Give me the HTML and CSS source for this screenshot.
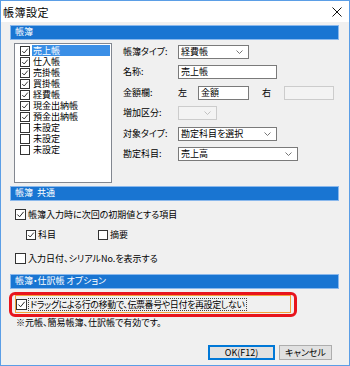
FILE: index.html
```html
<!DOCTYPE html>
<html lang="ja">
<head>
  <meta charset="UTF-8">
  <title>帳簿設定</title>
  <link rel="stylesheet" href="styles.css">
</head>
<body>

<div class="window">
  <div class="titlebar">
    <span class="title">帳簿設定</span>
    <svg class="close" width="10" height="10" viewBox="0 0 10 10">
      <path d="M0.5 0.5 L9.5 9.5 M9.5 0.5 L0.5 9.5" stroke="#111" stroke-width="1" fill="none"/>
    </svg>
  </div>

  <div class="body">
    <div class="bar">帳簿</div>
    <div class="ledger">
      <ul class="list">
        <li><span class="chk on"><svg viewBox="0 0 10 10"><path d="M1.5 5 L4 7.5 L8.5 2"/></svg></span><span class="item sel">売上帳</span></li>
        <li><span class="chk on"><svg viewBox="0 0 10 10"><path d="M1.5 5 L4 7.5 L8.5 2"/></svg></span><span class="item">仕入帳</span></li>
        <li><span class="chk on"><svg viewBox="0 0 10 10"><path d="M1.5 5 L4 7.5 L8.5 2"/></svg></span><span class="item">売掛帳</span></li>
        <li><span class="chk on"><svg viewBox="0 0 10 10"><path d="M1.5 5 L4 7.5 L8.5 2"/></svg></span><span class="item">買掛帳</span></li>
        <li><span class="chk on"><svg viewBox="0 0 10 10"><path d="M1.5 5 L4 7.5 L8.5 2"/></svg></span><span class="item">経費帳</span></li>
        <li><span class="chk on"><svg viewBox="0 0 10 10"><path d="M1.5 5 L4 7.5 L8.5 2"/></svg></span><span class="item">現金出納帳</span></li>
        <li><span class="chk on"><svg viewBox="0 0 10 10"><path d="M1.5 5 L4 7.5 L8.5 2"/></svg></span><span class="item">預金出納帳</span></li>
        <li><span class="chk"></span><span class="item">未設定</span></li>
        <li><span class="chk"></span><span class="item">未設定</span></li>
        <li><span class="chk"></span><span class="item">未設定</span></li>
      </ul>

      <div class="form">
        <span class="label">帳簿タイプ:</span>
        <div class="combo w71"><span>経費帳</span><svg class="arrow" width="7" height="4" viewBox="0 0 7 4"><path d="M0.5 0.5 L3.5 3.5 L6.5 0.5"/></svg></div>

        <span class="label">名称:</span>
        <div class="field w99">売上帳</div>

        <span class="label">金額欄:</span>
        <div class="amount">
          <span class="side">左</span>
          <div class="field w51">金額</div>
          <span class="side right">右</span>
          <div class="field w50 disabled"></div>
        </div>

        <span class="label">増加区分:</span>
        <div class="combo w39 disabled"><span></span><svg class="arrow" width="7" height="4" viewBox="0 0 7 4"><path d="M0.5 0.5 L3.5 3.5 L6.5 0.5"/></svg></div>

        <span class="label">対象タイプ:</span>
        <div class="combo w99"><span>勘定科目を選択</span><svg class="arrow" width="7" height="4" viewBox="0 0 7 4"><path d="M0.5 0.5 L3.5 3.5 L6.5 0.5"/></svg></div>

        <span class="label">勘定科目:</span>
        <div class="combo w120"><span>売上高</span><svg class="arrow" width="7" height="4" viewBox="0 0 7 4"><path d="M0.5 0.5 L3.5 3.5 L6.5 0.5"/></svg></div>
      </div>
    </div>

    <div class="bar">帳簿&nbsp;&nbsp;共通</div>
    <div class="opt first"><span class="chk on"><svg viewBox="0 0 10 10"><path d="M1.5 5 L4 7.5 L8.5 2"/></svg></span><span>帳簿入力時に次回の初期値とする項目</span></div>
    <div class="opt sub">
      <span class="chk on"><svg viewBox="0 0 10 10"><path d="M1.5 5 L4 7.5 L8.5 2"/></svg></span><span class="sub-text">科目</span>
      <span class="chk gap"></span><span>摘要</span>
    </div>
    <div class="opt third"><span class="chk"></span><span>入力日付、シリアルNo.を表示する</span></div>

    <div class="bar">帳簿・仕訳帳&nbsp;オプション</div>
    <div class="highlight">
      <div class="focus-box">
        <span class="chk on"><svg viewBox="0 0 10 10"><path d="M1.5 5 L4 7.5 L8.5 2"/></svg></span><span class="dotted">ドラッグによる行の移動で、伝票番号や日付を再設定しない</span>
      </div>
    </div>
    <div class="note">※元帳、簡易帳簿、仕訳帳で有効です。</div>

    <div class="buttons">
      <button class="btn ok">OK(F12)</button>
      <button class="btn cancel">キャンセル</button>
    </div>
  </div>
</div>

</body>
</html>
```

FILE: styles.css
```css
body {
  margin: 0;
  background: #fff;
}
.window {
  width: 350px;
  height: 366px;
  box-sizing: border-box;
  border: 1px solid #5b9ee6;
  background: #f0f0f0;
  font-family: "Noto Sans CJK JP", sans-serif;
  font-size: 9px;
  font-feature-settings: "palt";
  color: #000;
  overflow: hidden;
}
.titlebar {
  height: 21px;
  background: #fff;
  display: flex;
  align-items: center;
  justify-content: space-between;
  padding: 0 7px 0 2px;
}
.title {
  font-size: 11px;
  letter-spacing: 0.5px;
  line-height: 14px;
}
.body {
  padding: 3px 10px 0 9px;
}
.bar {
  height: 15px;
  box-sizing: border-box;
  background: #1975d2;
  border: 1px solid #8ab8ec;
  color: #fff;
  padding-left: 4px;
  line-height: 12px;
}
.ledger {
  display: flex;
  align-items: flex-start;
  padding: 3px 0 0 4px;
  margin-bottom: 3px;
}
.list {
  list-style: none;
  margin: 0;
  width: 98px;
  height: 140px;
  box-sizing: border-box;
  border: 1px solid #828790;
  background: #fff;
  padding: 1px 0 0 5px;
}
.list li {
  height: 11px;
  display: flex;
  align-items: center;
}
.chk {
  width: 11px;
  height: 11px;
  box-sizing: border-box;
  border: 1px solid #333;
  background: #fff;
  display: inline-block;
  flex: none;
}
.list .chk {
  width: 10px;
  height: 10px;
}
.chk svg {
  display: block;
  width: 100%;
  height: 100%;
}
.chk svg path {
  fill: none;
  stroke: #222;
  stroke-width: 1.1;
}
.item {
  width: 77px;
  margin-left: 2px;
  padding-left: 1px;
  line-height: 11px;
  height: 11px;
}
.item.sel {
  background: #3b8fe6;
  color: #fff;
}
.form {
  margin-left: 11px;
  display: grid;
  grid-template-columns: 55px auto;
  grid-template-rows: 18px 21px 21px 20px 21px 19px;
  align-items: center;
}
.label {
  line-height: 12px;
}
.combo, .field {
  height: 14px;
  box-sizing: border-box;
  border: 1px solid #7a7a7a;
  background: #fff;
  line-height: 12px;
  padding-left: 2px;
}
.combo {
  display: flex;
  align-items: center;
  justify-content: space-between;
  padding-right: 5px;
}
.arrow path {
  fill: none;
  stroke: #666;
  stroke-width: 0.9;
}
.disabled {
  border-color: #cccccc;
  background: #f3f3f3;
}
.disabled .arrow path {
  stroke: #bbb;
}
.w39 { width: 39px; }
.w50 { width: 50px; }
.w51 { width: 51px; }
.w71 { width: 71px; }
.w99 { width: 99px; }
.w120 { width: 120px; }
.amount {
  display: flex;
  align-items: center;
}
.side {
  width: 20px;
  line-height: 12px;
}
.side.right {
  margin-left: 13px;
  width: 22px;
}
.opt {
  display: flex;
  align-items: center;
  height: 11px;
  line-height: 12px;
  padding-left: 5px;
}
.opt .chk {
  margin-right: 2px;
}
.opt.first {
  margin-top: 8px;
}
.opt.sub {
  margin-top: 9px;
  padding-left: 16px;
}
.opt.sub .chk {
  width: 10px;
  height: 10px;
}
.sub-text {
  width: 60px;
}
.opt.third {
  margin-top: 13px;
  margin-bottom: 10px;
}
.highlight {
  margin: 3px 0 0 -1px;
  width: 288px;
  height: 25px;
  box-sizing: border-box;
  border: 3px solid #e8141c;
  border-radius: 6px;
  padding: 0 0 0 3px;
}
.focus-box {
  width: 276px;
  height: 18px;
  box-sizing: border-box;
  border: 1px solid #f3a33a;
  display: flex;
  align-items: center;
  padding-left: 0;
}
.focus-box .chk {
  margin-right: 1px;
}
.dotted {
  border: 1px dotted #444;
  line-height: 11px;
  padding: 0 1px;
  letter-spacing: -0.4px;
}
.note {
  margin: 0 0 0 6px;
  line-height: 12px;
}
.buttons {
  display: flex;
  justify-content: flex-end;
  gap: 4px;
  padding-right: 7px;
  margin-top: 16px;
}
.btn {
  height: 15px;
  box-sizing: border-box;
  background: #e1e1e1;
  border: 1px solid #adadad;
  font-family: "Noto Sans CJK JP", sans-serif;
  font-size: 9px;
  font-feature-settings: "palt";
  line-height: 12px;
  padding: 0;
  color: #000;
}
.btn.ok {
  width: 67px;
  border-color: #0078d7;
  box-shadow: inset 0 0 0 1px #0078d7;
}
.btn.cancel {
  width: 53px;
}
```
